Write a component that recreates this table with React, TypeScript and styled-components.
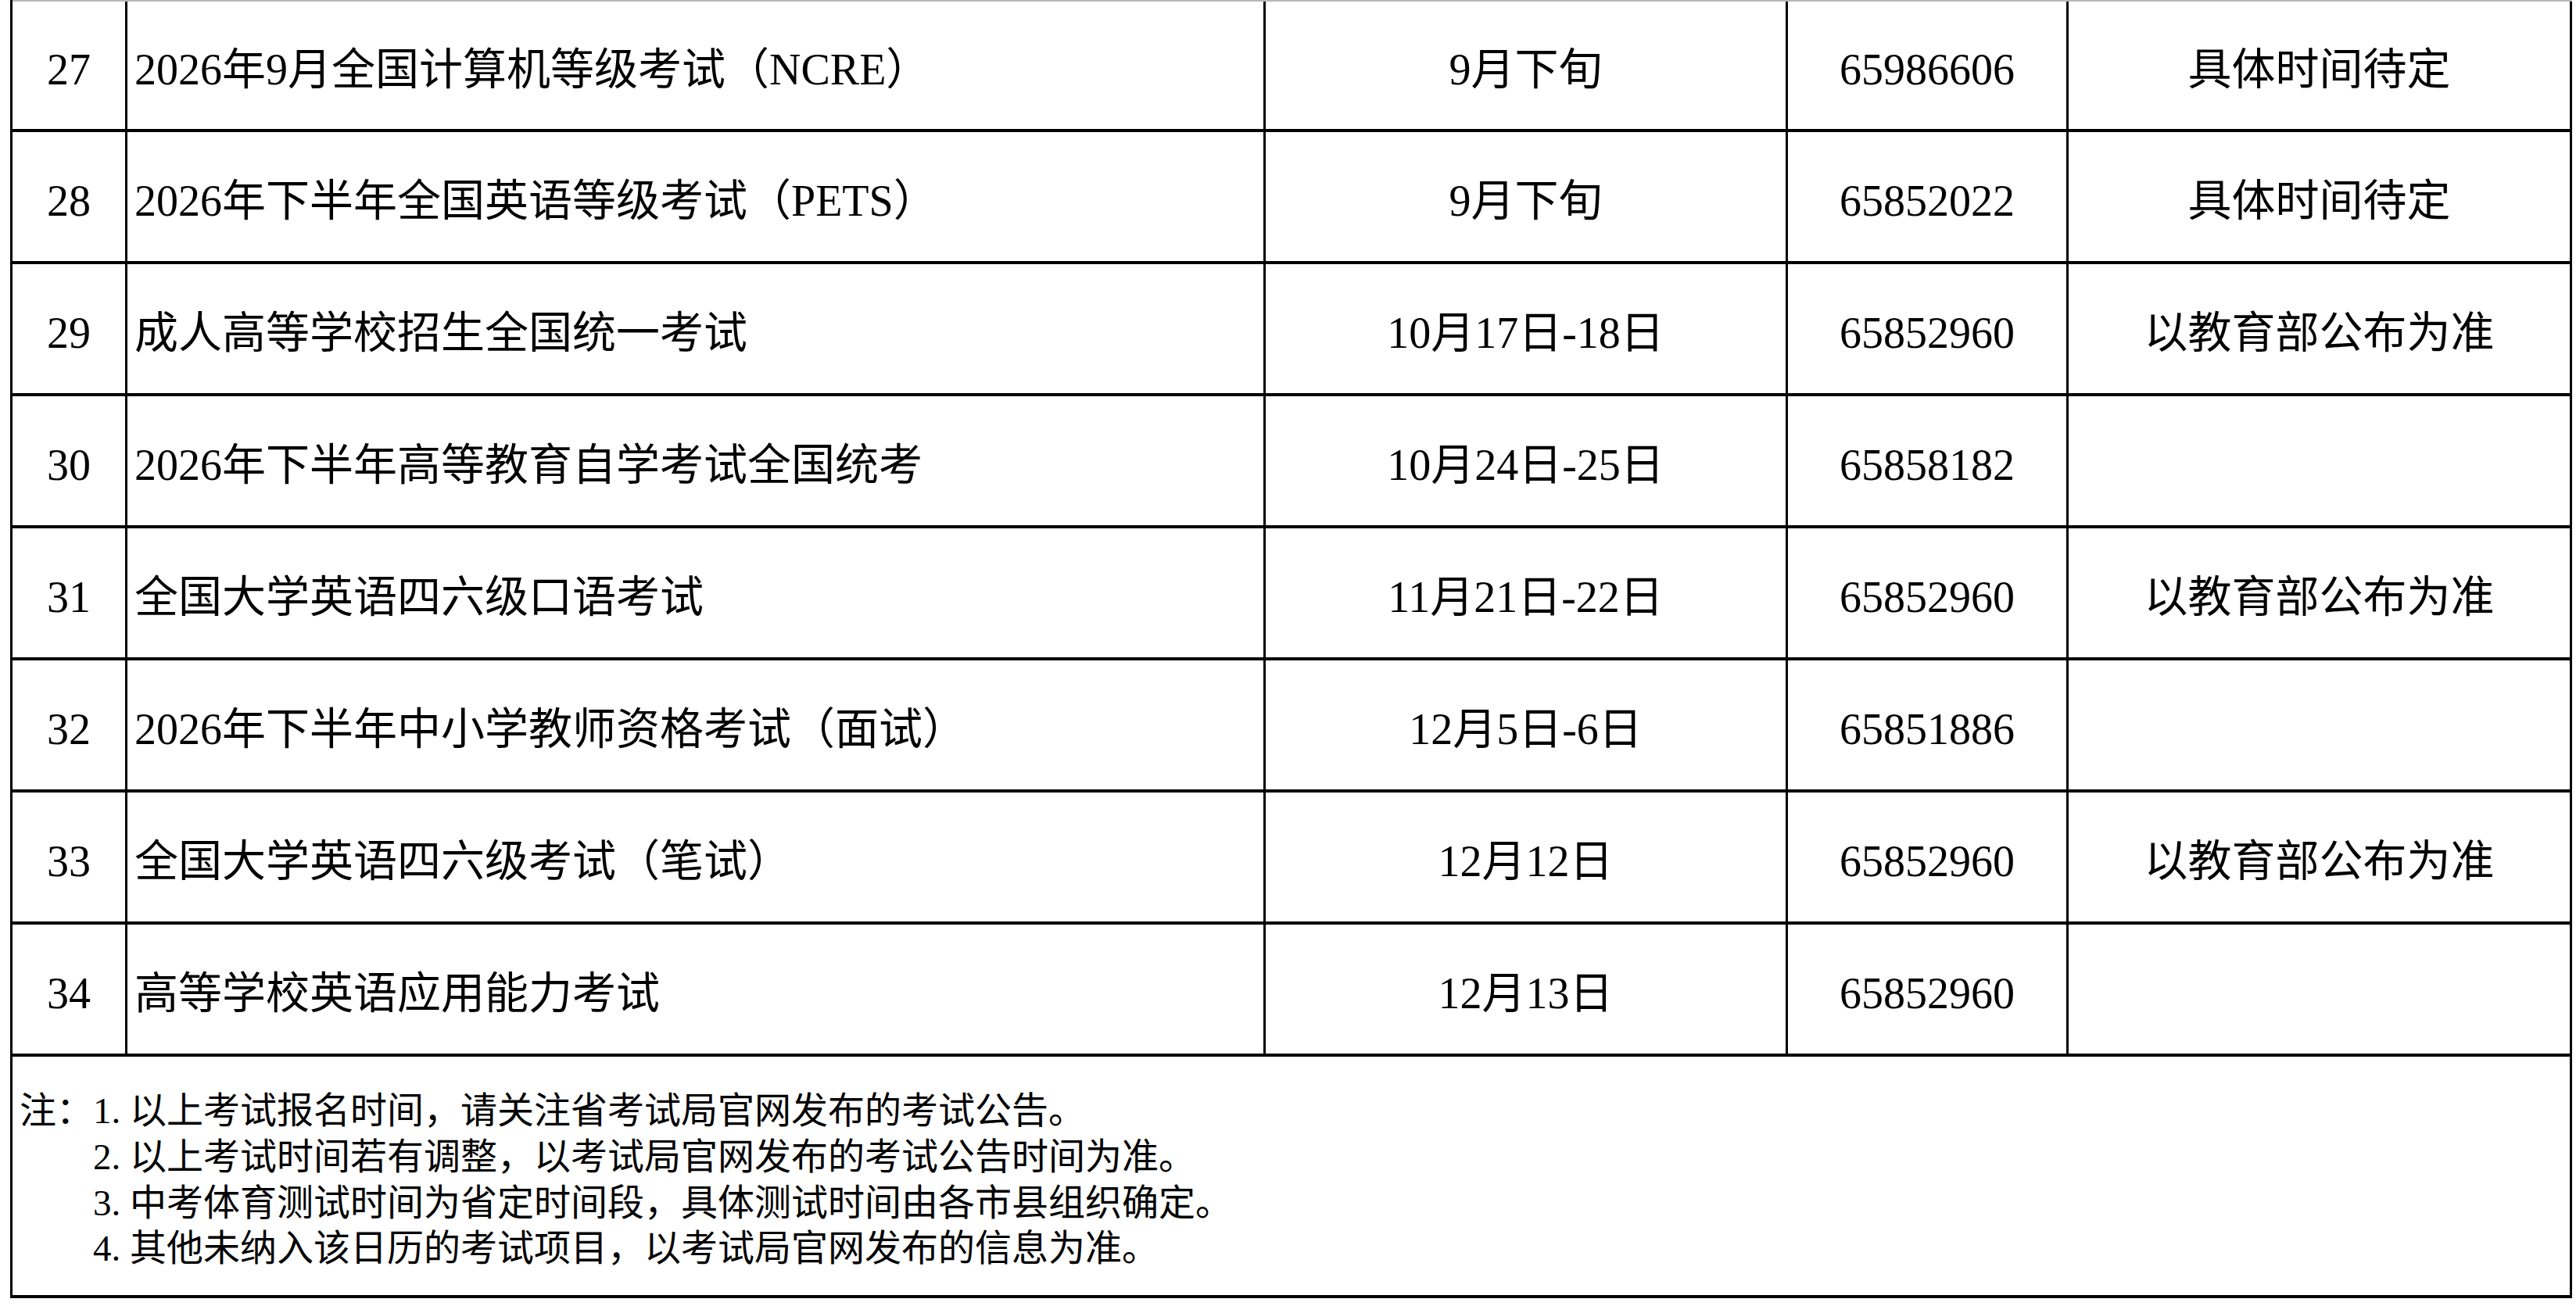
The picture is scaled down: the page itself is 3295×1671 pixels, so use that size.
import React from 'react';
import styled, { createGlobalStyle } from 'styled-components';

const GlobalStyle = createGlobalStyle`
  html, body {
    margin: 0;
    padding: 0;
    background: #ffffff;
  }
  body {
    font-family: "Liberation Serif", "Noto Sans CJK SC", serif;
    color: #000000;
  }
`;

interface ExamRow {
  no: number;
  name: string;
  date: string;
  phone: string;
  remark: string;
}

const rows: ExamRow[] = [
  { no: 27, name: '2026年9月全国计算机等级考试（NCRE）', date: '9月下旬', phone: '65986606', remark: '具体时间待定' },
  { no: 28, name: '2026年下半年全国英语等级考试（PETS）', date: '9月下旬', phone: '65852022', remark: '具体时间待定' },
  { no: 29, name: '成人高等学校招生全国统一考试', date: '10月17日-18日', phone: '65852960', remark: '以教育部公布为准' },
  { no: 30, name: '2026年下半年高等教育自学考试全国统考', date: '10月24日-25日', phone: '65858182', remark: '' },
  { no: 31, name: '全国大学英语四六级口语考试', date: '11月21日-22日', phone: '65852960', remark: '以教育部公布为准' },
  { no: 32, name: '2026年下半年中小学教师资格考试（面试）', date: '12月5日-6日', phone: '65851886', remark: '' },
  { no: 33, name: '全国大学英语四六级考试（笔试）', date: '12月12日', phone: '65852960', remark: '以教育部公布为准' },
  { no: 34, name: '高等学校英语应用能力考试', date: '12月13日', phone: '65852960', remark: '' },
];

const notes = [
  '以上考试报名时间，请关注省考试局官网发布的考试公告。',
  '以上考试时间若有调整，以考试局官网发布的考试公告时间为准。',
  '中考体育测试时间为省定时间段，具体测试时间由各市县组织确定。',
  '其他未纳入该日历的考试项目，以考试局官网发布的信息为准。',
];

export default function App() {
  return (
    <>
      <GlobalStyle />
      <Page>
        <Table>
          {rows.map((row, i) => (
            <Row key={row.no} $first={i === 0}>
              <Cell $width={147}>{row.no}</Cell>
              <Cell $width={1456} $left>{row.name}</Cell>
              <Cell $width={668}>{row.date}</Cell>
              <Cell $width={359}>{row.phone}</Cell>
              <Cell $width={644}>{row.remark}</Cell>
            </Row>
          ))}
          <Footer>
            <NoteBlock>
              <NoteLabel>注：</NoteLabel>
              <NoteList>
                {notes.map((text, i) => (
                  <NoteLine key={i}>
                    <NoteNum>{i + 1}.</NoteNum>
                    {text}
                  </NoteLine>
                ))}
              </NoteList>
            </NoteBlock>
          </Footer>
        </Table>
      </Page>
    </>
  );
}

const Page = styled.div`
  width: 3295px;
  height: 1671px;
  padding-left: 13px;
  box-sizing: border-box;
  background: #ffffff;
`;

const Table = styled.div`
  width: 3277px;
  border-left: 3px solid #000;
  box-sizing: border-box;
  display: flex;
  flex-direction: column;
`;

const Row = styled.div<{ $first?: boolean }>`
  display: flex;
  height: ${({ $first }) => ($first ? 163 : 165)}px;
  border-top: ${({ $first }) => ($first ? '2px solid #b8b8b8' : 'none')};
  border-bottom: 4px solid #000;
`;

const Cell = styled.div<{ $width: number; $left?: boolean }>`
  width: ${({ $width }) => $width}px;
  flex: none;
  box-sizing: border-box;
  border-right: 3px solid #000;
  display: flex;
  align-items: center;
  justify-content: ${({ $left }) => ($left ? 'flex-start' : 'center')};
  padding: 10px 0 0 ${({ $left }) => ($left ? 9 : 0)}px;
  font-size: 56px;
  line-height: 1;
  white-space: nowrap;
`;

const Footer = styled.div`
  height: 295px;
  padding: 10px 0 0 9px;
  border-right: 3px solid #000;
  border-bottom: 4px solid #000;
  display: flex;
  align-items: center;
  font-size: 47px;
  line-height: 58.7px;
`;

const NoteBlock = styled.div`
  display: flex;
  align-items: flex-start;
`;

const NoteLabel = styled.div`
  width: 2em;
  flex: none;
  white-space: nowrap;
`;

const NoteList = styled.div`
  display: flex;
  flex-direction: column;
`;

const NoteLine = styled.div`
  white-space: nowrap;
`;

const NoteNum = styled.span`
  display: inline-block;
  width: 1em;
`;
